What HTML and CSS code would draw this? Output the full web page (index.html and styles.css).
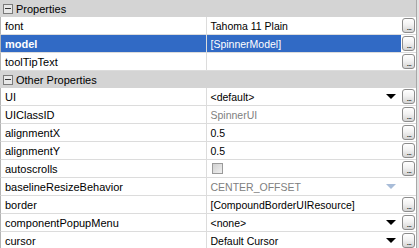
FILE: index.html
```html
<!DOCTYPE html>
<html lang="en">
<head>
    <meta charset="UTF-8">
    <title>Property Sheet</title>
    <link rel="stylesheet" href="styles.css">
</head>
<body>
    <div class="sheet">
        <div class="group"><span class="toggle"></span>Properties</div>

        <div class="row">
            <div class="name">font</div>
            <div class="value">Tahoma 11 Plain</div>
            <div class="more"><span class="dots">...</span></div>
        </div>
        <div class="row selected">
            <div class="name bold">model</div>
            <div class="value">[SpinnerModel]</div>
            <div class="more"><span class="dots">...</span></div>
        </div>
        <div class="row">
            <div class="name">toolTipText</div>
            <div class="value"></div>
            <div class="more"><span class="dots">...</span></div>
        </div>

        <div class="group"><span class="toggle"></span>Other Properties</div>

        <div class="row">
            <div class="name">UI</div>
            <div class="value">&lt;default&gt;<span class="arrow"></span></div>
            <div class="more"><span class="dots">...</span></div>
        </div>
        <div class="row">
            <div class="name">UIClassID</div>
            <div class="value muted">SpinnerUI</div>
            <div class="more"><span class="dots">...</span></div>
        </div>
        <div class="row">
            <div class="name">alignmentX</div>
            <div class="value">0.5</div>
            <div class="more"><span class="dots">...</span></div>
        </div>
        <div class="row">
            <div class="name">alignmentY</div>
            <div class="value">0.5</div>
            <div class="more"><span class="dots">...</span></div>
        </div>
        <div class="row">
            <div class="name">autoscrolls</div>
            <div class="value"><span class="check"></span></div>
            <div class="more"><span class="dots">...</span></div>
        </div>
        <div class="row">
            <div class="name">baselineResizeBehavior</div>
            <div class="value muted">CENTER_OFFSET<span class="arrow disabled"></span></div>
            <div class="more"></div>
        </div>
        <div class="row">
            <div class="name">border</div>
            <div class="value">[CompoundBorderUIResource]</div>
            <div class="more"><span class="dots">...</span></div>
        </div>
        <div class="row">
            <div class="name">componentPopupMenu</div>
            <div class="value">&lt;none&gt;<span class="arrow"></span></div>
            <div class="more"><span class="dots">...</span></div>
        </div>
        <div class="row">
            <div class="name">cursor</div>
            <div class="value">Default Cursor<span class="arrow"></span></div>
            <div class="more"><span class="dots">...</span></div>
        </div>
    </div>
</body>
</html>
```

FILE: styles.css
```css
body {
    margin: 0;
    padding: 0;
    background: #e4e4e4;
    font-family: "Liberation Sans", Arial, sans-serif;
    font-size: 11px;
    color: #000;
}
.sheet {
    width: 416px;
    border-right: 1px solid #a8a8a8;
    background: #fff;
}
.group {
    height: 17px;
    background: #d4d4d4;
    display: flex;
    align-items: center;
    font-size: 11px;
}
.toggle {
    width: 8px;
    height: 8px;
    border: 1px solid #7a7a7a;
    margin: 1px 3px 0 3px;
    position: relative;
    background: #e8e8e8;
}
.toggle::after {
    content: "";
    position: absolute;
    left: 1px;
    right: 1px;
    top: 3px;
    height: 1px;
    background: #333;
}
.row {
    height: 17px;
    display: flex;
    border-bottom: 1px solid #dcdcdc;
    border-left: 1px solid #b4b4b4;
}
.name {
    width: 203px;
    padding-left: 4px;
    border-right: 1px solid #dcdcdc;
    display: flex;
    align-items: center;
    white-space: nowrap;
}
.bold {
    font-weight: bold;
}
.value {
    width: 188px;
    padding: 0 5px 0 4px;
    display: flex;
    align-items: center;
    justify-content: space-between;
    font-size: 10.5px;
    white-space: nowrap;
}
.selected .name,
.selected .value {
    background: #316ac5;
    color: #fff;
}
.muted {
    color: #808080;
}
.more {
    width: 15px;
    display: flex;
    align-items: center;
}
.dots {
    width: 11px;
    height: 13px;
    margin-left: 1px;
    border: 1px solid #8c8c8c;
    border-radius: 3px;
    background: linear-gradient(#ffffff, #f2f2f2 45%, #d4d4d4);
    display: flex;
    align-items: flex-end;
    justify-content: center;
    font-size: 9px;
    line-height: 9px;
    color: #222;
    letter-spacing: -1px;
}
.arrow {
    width: 0;
    height: 0;
    border-left: 5px solid transparent;
    border-right: 5px solid transparent;
    border-top: 5px solid #000;
}
.arrow.disabled {
    border-top-color: #a8bcd8;
}
.check {
    width: 9px;
    height: 9px;
    margin-left: 1px;
    border: 1px solid #9a9a9a;
    background: linear-gradient(135deg, #d0d0d0, #f0f0f0);
}
```
